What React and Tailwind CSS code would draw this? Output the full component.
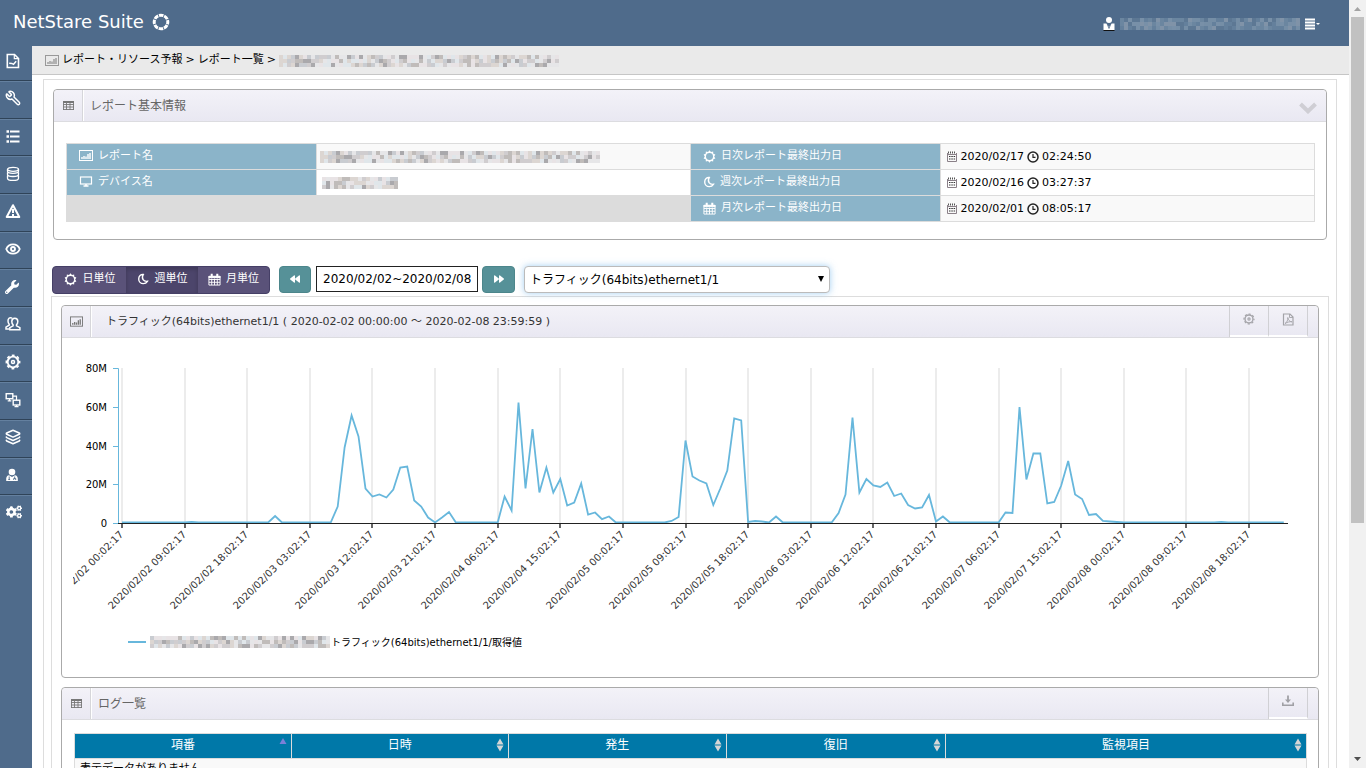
import React from "react";
import { Wrench, Layers, Eye } from "lucide-react";
import { FaWrench, FaCogs, FaBackward, FaForward } from "react-icons/fa";

/* ---------- icons ---------- */

function DocChartIcon() {
  return (
    <svg viewBox="0 0 16 16" className="size-4" fill="none" stroke="currentColor" strokeWidth="1.6">
      <path d="M2.3 1.5h7.2l4 4v9H2.3z" />
      <path d="M9.3 1.5v4.2h4.2" strokeWidth="1.2" />
      <path d="M4.2 10.3l2.6.1 1.7.9 2.7-3" strokeWidth="1.5" />
    </svg>
  );
}

function ListIcon() {
  return (
    <svg viewBox="0 0 16 16" className="size-4" stroke="currentColor">
      <path d="M1.500 3.500h2.500M1.500 8.500h2.500M1.500 13.500h2.500" strokeWidth="2.500" />
      <path d="M5 3.500h9.500M5 8.500h9.500M5 13.500h9.500" strokeWidth="1.800" />
    </svg>
  );
}

function DatabaseIcon() {
  return (
    <svg viewBox="0 0 16 16" className="size-4" fill="none" stroke="currentColor" strokeWidth="1.300">
      <ellipse cx="8" cy="3.300" rx="5.500" ry="2" />
      <path d="M2.500 3.300v2c0 1.200 2.500 2 5.500 2s5.500-.8 5.500-2v-2M2.500 6.500v2c0 1.200 2.500 2 5.500 2s5.500-.8 5.500-2v-2M2.500 9.500v2.700c0 1.200 2.500 2.200 5.500 2.200s5.500-1 5.500-2.200V9.500" />
    </svg>
  );
}

function WarningIcon() {
  return (
    <svg viewBox="0 0 16 16" className="size-4" fill="none" stroke="currentColor">
      <path d="M8 2.2L14.3 14H1.7z" strokeWidth="2" strokeLinejoin="round" />
      <path d="M8 6v4M8 11v2" strokeWidth="2" />
    </svg>
  );
}

function UsersIcon() {
  return (
    <svg viewBox="0 0 16 16" className="size-4" fill="none" stroke="currentColor" strokeWidth="1.500">
      <path d="M9.8 2.2c2 0 3 1.300 3 3.300 0 1.500-.5 2.600-1.300 3.300v1l3.400 1.900v2.100H4.800v-2.100l3.300-1.900v-1C7.300 8.100 6.800 7 6.800 5.500c0-2 1-3.300 3-3.300z" />
      <path d="M7.200 2.100C4.300.8 2.900 2.800 3 5c0 1.500.5 2.500 1.200 3.200v1L1 11.200v1.900h3" />
    </svg>
  );
}

function GearIcon({ className }) {
  return (
    <svg viewBox="0 0 16 16" className={className} fill="none" stroke="currentColor">
      <circle cx="8" cy="8" r="5.300" strokeWidth="1.800" />
      <circle cx="8" cy="8" r="6.700" strokeWidth="1.500" strokeDasharray="2.900 2.362" strokeDashoffset="1.450" />
      <circle cx="8" cy="8" r="1.500" strokeWidth="1.500" />
    </svg>
  );
}

function MonitorsIcon() {
  return (
    <svg viewBox="0 0 16 16" className="size-4" fill="none" stroke="currentColor" strokeWidth="1.400">
      <rect x="1.200" y="1.700" width="6.600" height="5" />
      <rect x="8.200" y="8.200" width="6.600" height="4.800" />
      <path d="M4.500 6.700v2M2.700 8.900h3.600M11.500 13v1.500M9.500 14.700h4M8 4.200h3.500v4" strokeWidth="1.200" />
    </svg>
  );
}

function DoctorIcon() {
  return (
    <svg viewBox="0 0 14 14" className="size-[14px]">
      <circle cx="7" cy="4" r="3.300" fill="currentColor" />
      <path d="M1.200 13V10.500Q1.500 7.500 4 7.300L7 9l3-1.700q2.500.2 2.800 3.200V13z" fill="currentColor" />
      <path d="M4.200 8.500v3M9.700 8.500v2M8.700 12v-1.500h2V12M3.300 11.500h1.800" stroke="#4f6b8b" strokeWidth="0.900" fill="none" />
    </svg>
  );
}

function SunIcon({ className }) {
  const pts = Array.from({ length: 20 }, (_, i) => {
    const r = i % 2 ? 5.8 : 7.6;
    const a = (i * Math.PI) / 10 - Math.PI / 2;
    return `${(8 + r * Math.cos(a)).toFixed(2)},${(8 + r * Math.sin(a)).toFixed(2)}`;
  }).join(" ");
  return (
    <svg viewBox="0 0 16 16" className={className}>
      <polygon points={pts} fill="currentColor" />
      <circle cx="8" cy="8" r="4.300" className="fill-(--hole)" />
    </svg>
  );
}

function MoonIcon() {
  return (
    <svg viewBox="0 0 12 12" className="size-3" fill="none" stroke="currentColor" strokeWidth="1.400">
      <path d="M6.300 1.500C3.800 1.200 1.700 3.200 1.700 5.900c0 2.700 2 4.700 4.600 4.700 1.700 0 3.200-.8 4.100-2.300-3.800.5-6.400-2.900-4.100-6.800z" />
    </svg>
  );
}

function CalendarIcon({ className }) {
  return (
    <svg viewBox="0 0 14 14" className={className} fill="none" stroke="currentColor">
      <path d="M1 4h12M1 13h12M1 3.500V13M13 3.500V13M4 6v7M7 6v7M10 6v7M1 7h12M1 10h12" strokeWidth="1" />
      <path d="M1 3.500h12v1.500H1z" fill="currentColor" strokeWidth="1" />
      <path d="M4 .8v3M10 .8v3" strokeWidth="2.200" />
    </svg>
  );
}

function DateIcon() {
  return (
    <svg viewBox="0 0 12 12" className="size-3 shrink-0" fill="none">
      <path d="M1.500 2v8.500h9V2M1.500 3.500h9" stroke="#8a8088" strokeWidth="1" />
      <path d="M2 1.500h8" stroke="#555" strokeWidth="2" strokeDasharray="1 1" />
      <path d="M3 5.500h6.500M3 8h6.500" stroke="#333" strokeWidth="1.200" strokeDasharray="1.500 0.800" />
    </svg>
  );
}

function ClockIcon() {
  return (
    <svg viewBox="0 0 12 12" className="size-3 shrink-0" fill="none" stroke="#222" strokeWidth="1.500">
      <circle cx="6" cy="6" r="5" />
      <path d="M6 3v3.300h2.500" strokeWidth="1.200" />
    </svg>
  );
}

function ChartIcon({ className }) {
  return (
    <svg viewBox="0 0 14 12" className={className} stroke="currentColor" fill="none">
      <rect x="0.500" y="0.500" width="13" height="10" strokeWidth="1" />
      <path d="M3 9v-2M5 9v-3M7 9v-2.500M9 9v-5M11 9v-6" strokeWidth="1.400" />
    </svg>
  );
}

function ScreenIcon({ className }) {
  return (
    <svg viewBox="0 0 14 12" className={className} stroke="currentColor" fill="none">
      <rect x="1.500" y="1" width="11" height="7" strokeWidth="1.200" />
      <path d="M4.500 10h5M7 8v2" strokeWidth="1.600" />
    </svg>
  );
}

function GridIcon() {
  return (
    <svg viewBox="0 0 11 9" className="h-[9px] w-[11px]" stroke="#777" fill="none">
      <path d="M0 1h11" strokeWidth="2" />
      <path d="M0 3.500h11M0 6h11M0 8.500h11M0.500 1v8M3.500 1v8M7 1v8M10.500 1v8" strokeWidth="0.900" />
    </svg>
  );
}

function PdfIcon() {
  return (
    <svg viewBox="0 0 12 13" className="h-[13px] w-3" fill="none" stroke="#a3a3a8" strokeWidth="1.200">
      <path d="M1.500 1h6.500l3 3v8H1.500z" />
      <path d="M7.500 1v3.500H11M3 10.500c2-1 3-3.500 2.800-6 .3 2.500 2 4.300 4.200 4.300-2-.3-4.500.2-7 1.700z" strokeWidth="0.900" />
    </svg>
  );
}

function DownloadIcon() {
  return (
    <svg viewBox="0 0 12 12" className="size-3" fill="none" stroke="#a0a0a5">
      <path d="M6 0.500v6" strokeWidth="1.800" />
      <path d="M3 4.500h6L6 8z" fill="#a0a0a5" stroke="none" />
      <path d="M0.800 7.500v2.700h10.400V7.500" strokeWidth="1.600" />
    </svg>
  );
}

/* ---------- redacted text ---------- */

function Mosaic({ cols, seed, palette }) {
  const cells = [];
  let s = seed;
  for (let r = 0; r < 3; r++) {
    for (let c = 0; c < cols; c++) {
      s = (s * 1103515245 + 12345) % 2147483648;
      const k = Math.floor((s / 2147483648) * palette.length);
      cells.push(<rect key={`${r}-${c}`} x={c * 4} y={r * 4} width="4" height="4" fill={palette[k]} />);
    }
  }
  return (
    <svg width={cols * 4} height="12" className="shrink-0" shapeRendering="crispEdges" aria-hidden="true">
      {cells}
    </svg>
  );
}

const GREYS = ["#e6e6e8", "#d0cdcf", "#e0e6ea", "#c0bcba", "#dcd6d2", "#aaa9ac", "#e8e3e5", "#c9ccd1"];
const BLUES = ["#6b86a0", "#758ea6", "#64809c", "#7890a8", "#8093a8", "#5d7894"];

/* ---------- chart ---------- */

const PEAKS = {
  10: [0.7],
  22: [6.5],
  31: [16, 75, 107, 86, 34, 26, 28, 25, 33, 55, 56, 22, 16, 5, 0, 5, 10.5],
  55: [26, 12, 120, 34, 93.5, 30, 55, 30, 43.5, 17, 20, 39, 8, 10, 3.3, 6],
  79: [1.5, 5.5, 82, 46, 42, 39, 17.5, 34, 52, 104, 102, 0.5, 1.5, 1, 0, 6],
  103: [9.5, 28, 105, 30, 43.5, 37, 35.5, 40, 26.5, 29, 17.5, 14, 15, 27.5, 1, 6],
  127: [10, 9.5, 115.5, 43, 69, 69, 19, 20.5, 37, 61.5, 28, 23.5, 7.5, 8.5, 1.5, 1, 0.5],
  158: [0.5],
};

const SERIES = Array(168).fill(0);
Object.entries(PEAKS).forEach(([start, values]) => {
  values.forEach((v, i) => {
    SERIES[Number(start) + i] = v;
  });
});

const STEP = 6.957;
const X0 = 49;
const BASE = 164;

const TICKS = [
  "2020/02/02 00:02:17", "2020/02/02 09:02:17", "2020/02/02 18:02:17", "2020/02/03 03:02:17",
  "2020/02/03 12:02:17", "2020/02/03 21:02:17", "2020/02/04 06:02:17", "2020/02/04 15:02:17",
  "2020/02/05 00:02:17", "2020/02/05 09:02:17", "2020/02/05 18:02:17", "2020/02/06 03:02:17",
  "2020/02/06 12:02:17", "2020/02/06 21:02:17", "2020/02/07 06:02:17", "2020/02/07 15:02:17",
  "2020/02/08 00:02:17", "2020/02/08 09:02:17", "2020/02/08 18:02:17",
];

function TrafficChart() {
  const line = SERIES.map((v, i) => `${(X0 + i * STEP).toFixed(1)},${(BASE - 0.5 - v).toFixed(1)}`).join(" ");
  return (
    <svg viewBox="0 0 1234 262" className="block w-full overflow-hidden" role="img" aria-label="トラフィック">
      {TICKS.map((t, i) => {
        const x = Math.round(X0 + i * 9 * STEP);
        return (
          <g key={t}>
            <path d={`M${x} 9V${BASE}`} stroke="#e6e6e6" strokeWidth="1.500" />
            <path d={`M${x} ${BASE}v5`} stroke="#333" strokeWidth="1.500" />
            <text x={x + 2} y={BASE + 12} textAnchor="end" fontSize="10" fill="#333" transform={`rotate(-45 ${x + 2} ${BASE + 12})`}>
              {t}
            </text>
          </g>
        );
      })}
      <path d={`M40 9.500h5.500V${BASE}M40 48.500h5.500M40 87.500h5.500M40 125.500h5.500M40 164.500h5.500`} stroke="#67b7dc" fill="none" />
      {["80M", "60M", "40M", "20M", "0"].map((t, i) => (
        <text key={t} x="34" y={13 + Math.round(i * 38.8)} textAnchor="end" fontSize="10" fill="#000">
          {t}
        </text>
      ))}
      <polyline points={line} fill="none" stroke="#67b7dc" strokeWidth="1.800" />
      <path d={`M45 ${BASE + 0.5}H1215`} stroke="#222" />
    </svg>
  );
}

/* ---------- panels ---------- */

function PanelHeader({ icon, title, small, children }) {
  return (
    <div className="flex h-8 items-stretch rounded-t border-b border-[#dcdce0] bg-linear-to-b from-[#f3f2f8] to-[#e9e8f2]">
      <span className="flex w-[29px] items-center justify-center border-r border-[#d6d6da]">{icon}</span>
      <h2 className={small ? "flex flex-1 items-center border-l border-white pt-px pl-[14px] text-[11px] text-[#333]" : "flex flex-1 items-center border-l border-white pl-[6px] text-xs text-[#666]"}>
        {title}
      </h2>
      {children}
    </div>
  );
}

function PanelButtons({ children }) {
  return <div className="mr-[10px] flex border-l border-[#d0d0d4]">{children}</div>;
}

function PanelButton({ label, children }) {
  return (
    <button type="button" aria-label={label} className="flex w-[39px] items-center justify-center border-r border-b-2 border-r-[#d0d0d4] border-b-white pb-[3px] text-[#a3a3a8]">
      {children}
    </button>
  );
}

const LABEL = "border border-[#dcdcdc] bg-[#8bb4c9] pl-3 text-left font-normal text-white [--hole:#8bb4c9]";

function Label({ icon, text }) {
  return (
    <th scope="row" className={LABEL}>
      <span className="flex items-center gap-[5px] pb-px">
        {icon}
        {text}
      </span>
    </th>
  );
}

function Stamp({ date, time }) {
  return (
    <td className="border border-[#dcdcdc] pl-[5px]">
      <span className="flex items-center gap-[3px] pt-px text-black">
        <DateIcon />
        {date}
        <ClockIcon />
        {time}
      </span>
    </td>
  );
}

function InfoPanel() {
  return (
    <section className="rounded border border-[#aaa]">
      <PanelHeader icon={<GridIcon />} title="レポート基本情報">
        <button type="button" aria-label="折りたたむ" className="w-9 pt-1">
          <svg viewBox="0 0 18 12" className="mx-auto h-3 w-[18px]" fill="none" stroke="#cfced4" strokeWidth="4">
            <path d="M1.500 2L9 9.300 16.500 2" />
          </svg>
        </button>
      </PanelHeader>
      <div className="pt-[21px] pr-[11px] pb-[17px] pl-3">
        <table className="w-full table-fixed border-collapse text-[11px]">
          <colgroup>
            <col className="w-[20%]" />
            <col className="w-[30%]" />
            <col className="w-[20%]" />
            <col className="w-[30%]" />
          </colgroup>
          <tbody>
            <tr className="h-[26px] bg-[#f9f9f9]">
              <Label icon={<ChartIcon className="h-3 w-[14px]" />} text="レポート名" />
              <td className="border border-[#dcdcdc] pl-[3px]">
                <Mosaic cols={70} seed={7} palette={GREYS} />
              </td>
              <Label icon={<SunIcon className="size-[13px]" />} text="日次レポート最終出力日" />
              <Stamp date="2020/02/17" time="02:24:50" />
            </tr>
            <tr className="h-[26px]">
              <Label icon={<ScreenIcon className="h-3 w-[14px]" />} text="デバイス名" />
              <td className="border border-[#dcdcdc] pl-[5px]">
                <Mosaic cols={19} seed={91} palette={GREYS} />
              </td>
              <Label icon={<MoonIcon />} text="週次レポート最終出力日" />
              <Stamp date="2020/02/16" time="03:27:37" />
            </tr>
            <tr className="h-[26px] bg-[#f9f9f9]">
              <td colSpan={2} className="border border-[#dcdcdc] bg-[#dcdcdc]" />
              <Label icon={<CalendarIcon className="size-[13px]" />} text="月次レポート最終出力日" />
              <Stamp date="2020/02/01" time="08:05:17" />
            </tr>
          </tbody>
        </table>
      </div>
    </section>
  );
}

const TEAL = "flex h-[27px] items-center justify-center rounded border border-[#4c868b] bg-[#569198] pb-px text-white";

function Toolbar() {
  return (
    <div className="flex h-[28px] items-start">
      <div className="flex h-7 overflow-hidden rounded border border-[#453f66] bg-[#5a5279] text-[11px] text-white">
        <button type="button" className="flex w-[73px] items-center justify-center gap-[6px] pb-[2px] [--hole:#5a5279]">
          <SunIcon className="size-[13px]" />
          日単位
        </button>
        <button type="button" aria-pressed="true" className="flex w-[72px] items-center justify-center gap-[6px] bg-[#4c456b] pb-[2px] shadow-[inset_0_2px_4px_rgba(0,0,0,0.2)]">
          <MoonIcon />
          週単位
        </button>
        <button type="button" className="flex w-[71px] items-center justify-center gap-[5px] pb-[2px]">
          <CalendarIcon className="size-[13px]" />
          月単位
        </button>
      </div>
      <button type="button" aria-label="前へ" className={`${TEAL} ml-[9px] w-8`}>
        <FaBackward className="size-[10px]" />
      </button>
      <input type="text" aria-label="期間" defaultValue="2020/02/02~2020/02/08" className="ml-[5px] h-[26px] w-[162px] border border-[#222] bg-white px-[6px] text-xs text-black outline-none" />
      <button type="button" aria-label="次へ" className={`${TEAL} ml-1 w-[33px]`}>
        <FaForward className="size-[10px]" />
      </button>
      <div className="relative ml-[9px] w-[306px]">
        <select aria-label="グラフ" className="h-[27px] w-full appearance-none rounded border border-[#bbb] bg-white pl-[5px] text-xs text-black shadow-[0_0_7px_rgba(102,175,233,0.6)] outline-none">
          <option>トラフィック(64bits)ethernet1/1</option>
        </select>
        <svg viewBox="0 0 6 6" className="pointer-events-none absolute top-[10px] right-[6px] size-[6px]">
          <path d="M0 0h6L3 6z" />
        </svg>
      </div>
    </div>
  );
}

function Sorter({ active }) {
  return (
    <svg viewBox="0 0 8 14" className="absolute top-1 right-1 h-[14px] w-2">
      {active ? <path d="M0.500 6L4 0l3.500 6z" fill="#7a80d8" /> : <path d="M0.500 6.500L4 0.500l3.500 6zM0.500 7.500h7L4 13.500z" fill="#d6d6d6" />}
    </svg>
  );
}

const LOG_COLUMNS = ["項番", "日時", "発生", "復旧", "監視項目"];

function LogPanel() {
  return (
    <section className="mt-[9px] rounded border border-[#aaa] pb-10">
      <PanelHeader icon={<GridIcon />} title="ログ一覧">
        <PanelButtons>
          <PanelButton label="ダウンロード">
            <DownloadIcon />
          </PanelButton>
        </PanelButtons>
      </PanelHeader>
      <div className="pt-[13px] pr-[11px] pl-3">
        <table className="w-full table-fixed border-collapse">
          <colgroup>
            <col className="w-[17.6%]" />
            <col className="w-[17.6%]" />
            <col className="w-[17.7%]" />
            <col className="w-[17.8%]" />
            <col />
          </colgroup>
          <thead>
            <tr className="h-[25px] bg-[#0078a8] text-xs text-white">
              {LOG_COLUMNS.map((c, i) => (
                <th key={c} scope="col" className="relative border border-[#dcdcdc] pb-[3px] font-normal">
                  {c}
                  <Sorter active={i === 0} />
                </th>
              ))}
            </tr>
          </thead>
          <tbody>
            <tr className="bg-[#f9f9f9] text-[11px] text-black">
              <td colSpan={5} className="border border-[#dcdcdc] px-[5px] leading-5">表示データがありません</td>
            </tr>
          </tbody>
        </table>
      </div>
    </section>
  );
}

function ChartPanel() {
  return (
    <section className="rounded border border-[#aaa]">
      <PanelHeader icon={<ChartIcon className="h-3 w-[13px] text-[#777]" />} title="トラフィック(64bits)ethernet1/1 ( 2020-02-02 00:00:00 ～ 2020-02-08 23:59:59 )" small>
        <PanelButtons>
          <PanelButton label="設定">
            <GearIcon className="size-3" />
          </PanelButton>
          <PanelButton label="PDF">
            <PdfIcon />
          </PanelButton>
        </PanelButtons>
      </PanelHeader>
      <div className="px-[11px] pt-[21px] pb-[27px]">
        <TrafficChart />
        <div className="mt-[13px] flex h-4 items-center pl-[55px] text-[10px] text-black">
          <span className="mr-1 h-[2px] w-[18px] bg-[#67b7dc]" />
          <Mosaic cols={45} seed={33} palette={GREYS} />
          <span className="pl-px">トラフィック(64bits)ethernet1/1/取得値</span>
        </div>
      </div>
    </section>
  );
}

/* ---------- shell ---------- */

const NAV = [
  ["保守", <Wrench className="size-4 -scale-x-100" strokeWidth={2.2} />],
  ["一覧", <ListIcon />],
  ["データ", <DatabaseIcon />],
  ["アラート", <WarningIcon />],
  ["監視", <Eye className="size-4" strokeWidth={2.8} />],
  ["ツール", <FaWrench className="size-[14px]" />],
  ["ユーザー", <UsersIcon />],
  ["設定", <GearIcon className="size-4" />],
  ["ネットワーク", <MonitorsIcon />],
  ["レイヤー", <Layers className="size-4" strokeWidth={2.4} />],
  ["サポート", <DoctorIcon />],
  ["システム", <FaCogs className="size-4" />],
];

const NAV_LINK = "flex h-full items-center border-b border-[#2f4358] pb-[3px] pl-[5px]";

function Sidebar() {
  return (
    <nav className="w-8 shrink-0 bg-[#4f6b8b] text-white">
      <a href="#report" aria-label="レポート" className="flex h-[35px] items-center border-b border-[#2f4358] pb-[5px] pl-[5px]">
        <DocChartIcon />
      </a>
      <ul className="grid h-[452px] auto-rows-fr">
        {NAV.map(([label, icon], i) => (
          <li key={label} className="border-t border-[#64809f]">
            <a href={`#nav${i}`} aria-label={label} className={i === NAV.length - 1 ? "flex h-full items-center pb-[6px] pl-[6px]" : NAV_LINK}>
              {icon}
            </a>
          </li>
        ))}
      </ul>
    </nav>
  );
}

function Header() {
  return (
    <header className="flex h-[46px] shrink-0 items-center bg-[#4f6b8b] pr-[29px] pb-[3px] pl-[13px] text-white">
      <h1 className="text-lg">NetStare Suite</h1>
      <svg viewBox="0 0 18 18" className="ml-2 size-[18px]" fill="none" stroke="#fff">
        <circle cx="9" cy="9" r="6.800" strokeWidth="3" strokeDasharray="4.500 0.841" strokeDashoffset="2.250" />
      </svg>
      <div className="ml-auto flex items-center gap-[5px] pt-1">
        <svg viewBox="0 0 12 14" className="h-[14px] w-3">
          <circle cx="6" cy="3" r="3" fill="#fff" />
          <path d="M0.500 13V6.500h3L6 10l2.500-3.500h3V13z" fill="#fff" />
          <path d="M4 6.500l2 5 2-5" stroke="#4f6b8b" strokeWidth="0.800" fill="none" />
          <path d="M0.500 13.500h11" stroke="#111" />
        </svg>
        <Mosaic cols={45} seed={12} palette={BLUES} />
        <button type="button" aria-label="メニュー">
          <svg viewBox="0 0 15 12" className="h-3 w-[15px]">
            <path d="M0 1.500h10M0 4.500h10M0 7.500h10M0 10.500h10" stroke="#fff" strokeWidth="1.800" />
            <path d="M11 5h4l-2 2z" fill="#fff" />
          </svg>
        </button>
      </div>
    </header>
  );
}

function Breadcrumb() {
  return (
    <nav aria-label="パンくず" className="flex h-[29px] items-center border-b border-[#c6c6c6] bg-[#eaeaea] pt-px pl-[13px] text-[11px] text-black">
      <ChartIcon className="mr-[3px] h-3 w-[14px] text-[#999]" />
      <a href="#reports">レポート・リソース予報</a>
      <span className="px-[3px]">&gt;</span>
      <a href="#list">レポート一覧</a>
      <span className="px-[3px]">&gt;</span>
      <Mosaic cols={70} seed={7} palette={GREYS} />
    </nav>
  );
}

function ScrollTrack() {
  return (
    <div aria-hidden="true" className="flex w-[17px] shrink-0 flex-col items-center bg-[#f1f1f1]">
      <svg viewBox="0 0 17 17" className="size-[17px] shrink-0">
        <path d="M5 11h7L8.500 7z" fill="#a3a3a3" />
      </svg>
      <div className="flex w-[13px] flex-1 flex-col">
        <div className="h-[69%] bg-[#c1c1c1]" />
      </div>
      <svg viewBox="0 0 17 17" className="size-[17px] shrink-0">
        <path d="M5 6h7L8.500 10z" fill="#505050" />
      </svg>
    </div>
  );
}

export default function App() {
  return (
    <div className="flex h-screen overflow-hidden bg-white font-['DejaVu_Sans','Noto_Sans_CJK_JP',sans-serif]">
      <div className="flex min-w-0 flex-1 flex-col">
        <Header />
        <div className="flex min-h-0 flex-1">
          <Sidebar />
          <main className="min-w-0 flex-1 overflow-hidden">
            <Breadcrumb />
            <div className="mt-1 mr-3 ml-[11px] border border-[#ddd] px-[7px] pt-[9px]">
              <div className="mx-[2px]">
                <InfoPanel />
              </div>
              <div className="mx-px mt-[26px]">
                <Toolbar />
              </div>
              <div className="mt-[2px] border border-[#ddd] px-[9px] pt-2 pb-10">
                <ChartPanel />
                <LogPanel />
              </div>
            </div>
          </main>
        </div>
      </div>
      <ScrollTrack />
    </div>
  );
}
